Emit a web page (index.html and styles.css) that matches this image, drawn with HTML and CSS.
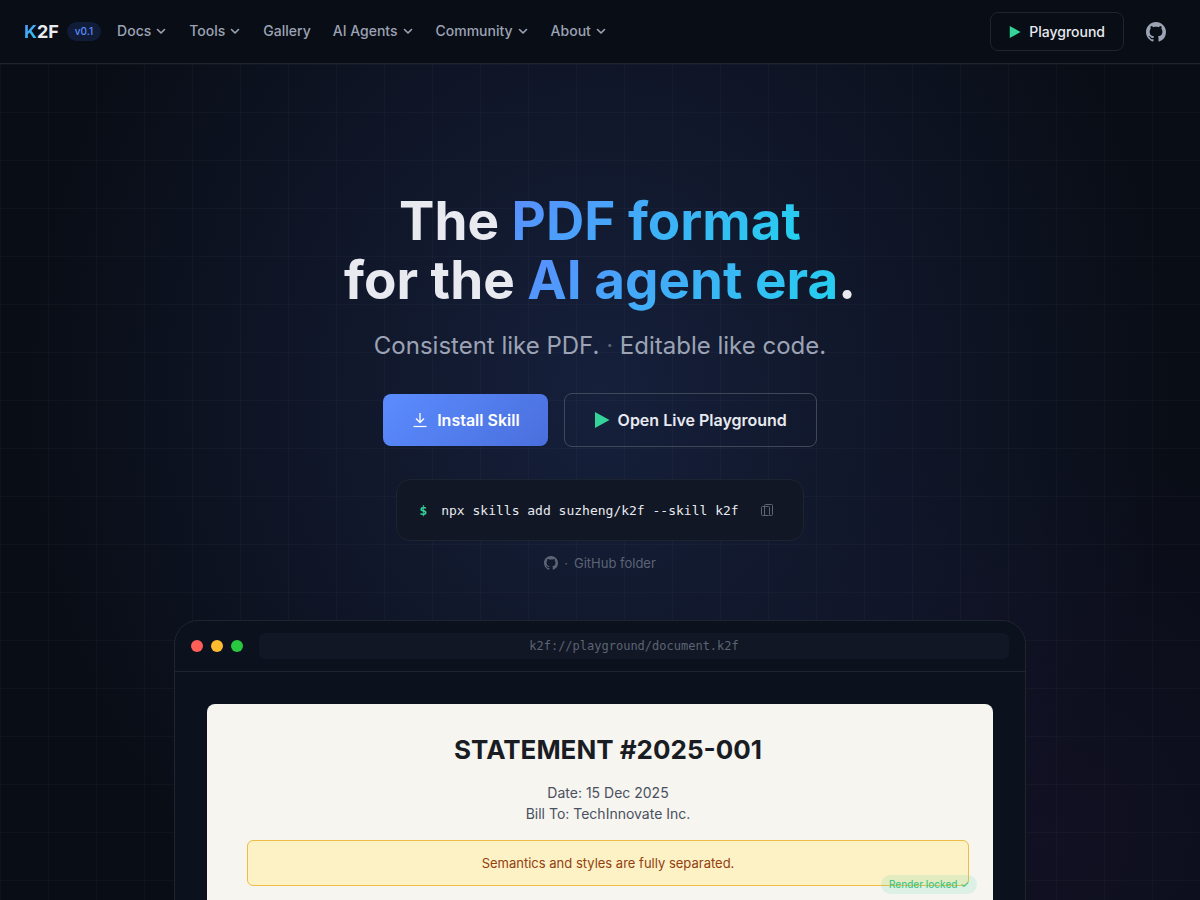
FILE: index.html
```html
<!DOCTYPE html>
<html lang="en">
<head>
    <meta charset="UTF-8">
    <meta name="viewport" content="width=device-width, initial-scale=1.0">
    <title>K2F</title>
    <link rel="stylesheet" href="styles.css">
</head>
<body>
    <svg class="sprite" aria-hidden="true">
        <symbol id="chevron" viewBox="0 0 12 12"><path d="M2.500 4.500 6 8 9.500 4.500" fill="none" stroke="currentColor" stroke-width="1.6" stroke-linecap="round" stroke-linejoin="round"/></symbol>
        <symbol id="play" viewBox="0 0 16 16"><path d="M1 0 15.500 8 1 16z" fill="currentColor"/></symbol>
        <symbol id="github" viewBox="0 0 16 16"><path fill="currentColor" d="M8 0C3.58 0 0 3.58 0 8c0 3.54 2.29 6.53 5.47 7.59.4.07.55-.17.55-.38 0-.19-.01-.82-.01-1.49-2.01.37-2.53-.49-2.69-.94-.09-.23-.48-.94-.82-1.13-.28-.15-.68-.52-.01-.53.63-.01 1.08.58 1.23.82.72 1.21 1.87.87 2.33.66.07-.52.28-.87.51-1.07-1.78-.2-3.64-.89-3.64-3.95 0-.87.31-1.59.82-2.15-.08-.2-.36-1.02.08-2.12 0 0 .67-.21 2.2.82.64-.18 1.32-.27 2-.27s1.36.09 2 .27c1.53-1.04 2.2-.82 2.2-.82.44 1.1.16 1.92.08 2.12.51.56.82 1.27.82 2.15 0 3.07-1.87 3.75-3.65 3.95.29.25.54.73.54 1.48 0 1.07-.01 1.93-.01 2.2 0 .21.15.46.55.38A8.01 8.01 0 0 0 16 8c0-4.42-3.58-8-8-8z"/></symbol>
    </svg>

    <header class="header">
        <a class="logo" href="#"><span class="logo-k">K</span>2F</a>
        <span class="version">v0.1</span>
        <nav class="nav">
            <button type="button" class="nav-item">Docs <svg class="chevron"><use href="#chevron"/></svg></button>
            <button type="button" class="nav-item">Tools <svg class="chevron"><use href="#chevron"/></svg></button>
            <a href="#" class="nav-item">Gallery</a>
            <button type="button" class="nav-item">AI Agents <svg class="chevron"><use href="#chevron"/></svg></button>
            <button type="button" class="nav-item">Community <svg class="chevron"><use href="#chevron"/></svg></button>
            <button type="button" class="nav-item">About <svg class="chevron"><use href="#chevron"/></svg></button>
        </nav>
        <div class="header-actions">
            <a href="#" class="btn-small"><svg class="play play-small"><use href="#play"/></svg>Playground</a>
            <a href="#" class="icon-link" aria-label="GitHub"><svg class="github"><use href="#github"/></svg></a>
        </div>
    </header>

    <main class="hero">
        <h1 class="title">The <span class="gradient">PDF format</span><br>for the <span class="gradient">AI agent era</span>.</h1>
        <p class="subtitle">Consistent like PDF. <span class="dot">·</span> Editable like code.</p>

        <div class="cta">
            <a href="#" class="btn btn-primary">
                <svg class="download" viewBox="0 0 16 16" fill="none" stroke="currentColor"><path d="M8 1v9M4 6.500 8 10.500l4-4" stroke-width="1.3"/><path d="M1.500 14.500h13" stroke-width="1.2"/></svg>
                Install Skill
            </a>
            <a href="#" class="btn btn-outline"><svg class="play"><use href="#play"/></svg>Open Live Playground</a>
        </div>

        <div class="command">
            <span class="prompt">$</span>
            <code class="code">npx skills add suzheng/k2f --skill k2f</code>
            <button type="button" class="copy" aria-label="Copy">
                <svg class="copy-icon" viewBox="0 0 14 14" fill="none" stroke="currentColor"><rect x="1.500" y="3.500" width="8" height="9" rx="1"/><path d="M4.500 12.500V2.500a1 1 0 0 1 1-1h6a1 1 0 0 1 1 1v9a1 1 0 0 1-1 1h-2"/></svg>
            </button>
        </div>
        <a href="#" class="folder"><svg class="github github-small"><use href="#github"/></svg><span>·</span>GitHub folder</a>

        <section class="window">
            <div class="window-bar">
                <span class="light red"></span>
                <span class="light yellow"></span>
                <span class="light green"></span>
                <div class="address">k2f://playground/document.k2f</div>
            </div>
            <div class="window-body">
                <article class="paper">
                    <h2 class="paper-title">STATEMENT #2025-001</h2>
                    <p class="paper-meta">Date: 15 Dec 2025<br>Bill To: TechInnovate Inc.</p>
                    <p class="notice">Semantics and styles are fully separated.</p>
                    <span class="locked">Render locked ✓</span>
                </article>
            </div>
        </section>
    </main>
</body>
</html>
```

FILE: styles.css
```css
* {
    box-sizing: border-box;
}
html {
    height: 100%;
}
body {
    height: 100%;
    margin: 0;
    display: flex;
    flex-direction: column;
    overflow: hidden;
    background: #03050a;
    color: #e8eaf0;
    font-family: Inter, sans-serif;
}
a {
    color: inherit;
    text-decoration: none;
}
h1, h2, p {
    margin: 0;
}
.sprite {
    position: absolute;
    width: 0;
    height: 0;
}

/* Header */
.header {
    display: flex;
    align-items: center;
    flex-shrink: 0;
    height: 64px;
    padding: 0 24px;
    background: #090d16;
    border-bottom: 1px solid #20242e;
}
.logo {
    font-size: 18px;
    font-weight: 700;
}
.logo-k {
    background: linear-gradient(135deg, #5b8cff, #22d3ee);
    background-clip: text;
    color: transparent;
}
.version {
    margin-left: 8px;
    padding: 0 8px;
    border-radius: 10px;
    background: #111c38;
    color: #5b8cff;
    font-size: 10px;
    font-weight: 500;
    line-height: 19px;
}
.nav {
    display: flex;
    gap: 22px;
    margin-left: 16px;
    padding-bottom: 2px;
}
.nav-item {
    display: flex;
    align-items: center;
    gap: 4px;
    padding: 0;
    border: none;
    background: none;
    color: #9ca3b4;
    font-family: inherit;
    font-size: 14px;
    font-weight: 500;
    line-height: 20px;
    cursor: pointer;
}
.chevron {
    width: 12px;
    height: 12px;
}
.header-actions {
    display: flex;
    align-items: center;
    gap: 12px;
    margin-left: auto;
}
.btn-small {
    display: flex;
    align-items: center;
    gap: 8px;
    height: 39px;
    padding: 0 18px;
    border: 1px solid #20242e;
    border-radius: 8px;
    font-size: 14px;
    font-weight: 500;
}
.icon-link {
    display: flex;
    padding: 10px;
    color: #9ca3b4;
}
.github {
    width: 20px;
    height: 20px;
}
.github-small {
    width: 14px;
    height: 14px;
}
.play {
    width: 16px;
    height: 16px;
    color: #34d399;
}
.play-small {
    width: 12px;
    height: 12px;
}

/* Hero */
.hero {
    display: flex;
    flex-direction: column;
    align-items: center;
    flex: 1;
    min-height: 0;
    padding: 128px 24px 0;
    background:
        linear-gradient(rgba(255, 255, 255, 0.022) 1px, transparent 1px) 0 0 / 48px 48px,
        linear-gradient(90deg, rgba(255, 255, 255, 0.022) 1px, transparent 1px) 0 0 / 48px 48px,
        radial-gradient(ellipse 36% 48% at 86% 92%, rgba(139, 72, 246, 0.06), transparent),
        radial-gradient(ellipse 48% 76% at 50% 40%, rgba(91, 130, 255, 0.16), transparent),
        #090d16;
}
.title {
    font-size: 53px;
    font-weight: 700;
    line-height: 59px;
    text-align: center;
}
.gradient {
    background: linear-gradient(135deg, #5b8cff, #22d3ee);
    background-clip: text;
    color: transparent;
}
.subtitle {
    margin-top: 20px;
    color: #9ca3b4;
    font-size: 24px;
    line-height: 32px;
    text-align: center;
}
.dot {
    color: #5c6475;
}
.cta {
    display: flex;
    flex-wrap: wrap;
    align-items: center;
    justify-content: center;
    gap: 16px;
    margin-top: 31px;
}
.btn {
    display: flex;
    align-items: center;
    gap: 8px;
    border-radius: 8px;
    font-size: 16px;
    font-weight: 600;
    line-height: 20px;
}
.btn-primary {
    padding: 16px 28px;
    background: linear-gradient(135deg, #5b8cff, #4a6fdc);
    color: #fff;
}
.btn-outline {
    padding: 16px 29px;
    border: 1px solid #404759;
}
.download {
    width: 18px;
    height: 16px;
}
.command {
    display: flex;
    align-items: center;
    gap: 14px;
    margin-top: 32px;
    padding: 16px 22px;
    border: 1px solid #1c2331;
    border-radius: 14px;
    background: #111724;
    font-family: "DejaVu Sans Mono", monospace;
    font-size: 13px;
}
.prompt {
    color: #34d399;
    font-weight: 700;
}
.code {
    font-family: inherit;
}
.copy {
    display: flex;
    padding: 7px;
    border: none;
    background: none;
    color: #5c6475;
    cursor: pointer;
}
.copy-icon {
    width: 14px;
    height: 14px;
}
.folder {
    display: flex;
    align-items: center;
    gap: 6px;
    margin-top: 12px;
    color: #5c6475;
    font-size: 13px;
    line-height: 20px;
}

/* Preview window */
.window {
    width: 100%;
    max-width: 852px;
    margin-top: 47px;
    border: 1px solid #20242e;
    border-radius: 24px;
    background: #0b111d;
}
.window-bar {
    display: flex;
    align-items: center;
    gap: 8px;
    padding: 12px 16px;
    border-bottom: 1px solid #20242e;
}
.light {
    width: 12px;
    height: 12px;
    border-radius: 50%;
}
.red {
    background: #ff5f57;
}
.yellow {
    background: #febc2e;
}
.green {
    background: #28c840;
}
.address {
    flex: 1;
    margin-left: 8px;
    border-radius: 6px;
    background: #111724;
    color: #5c6475;
    font-family: "DejaVu Sans Mono", monospace;
    font-size: 12px;
    line-height: 26px;
    text-align: center;
}
.window-body {
    padding: 32px;
}
.paper {
    position: relative;
    padding: 28px 24px 40px 40px;
    border-radius: 8px;
    background: #f6f5f0;
    color: #1a1c24;
    text-align: center;
}
.paper-title {
    font-size: 26px;
    font-weight: 700;
    line-height: 36px;
}
.paper-meta {
    margin-top: 14px;
    color: #4b5060;
    font-size: 14px;
    line-height: 21px;
}
.notice {
    margin-top: 16px;
    padding: 12px;
    border: 1px solid #f0bd45;
    border-radius: 6px;
    background: #fdf1c6;
    color: #92400e;
    font-size: 13px;
    line-height: 20px;
}
.locked {
    position: absolute;
    right: 16px;
    top: 171px;
    padding: 0 8px;
    border-radius: 10px;
    background: rgba(52, 211, 153, 0.13);
    color: #46c68b;
    font-size: 10px;
    font-weight: 500;
    line-height: 19px;
}
```
